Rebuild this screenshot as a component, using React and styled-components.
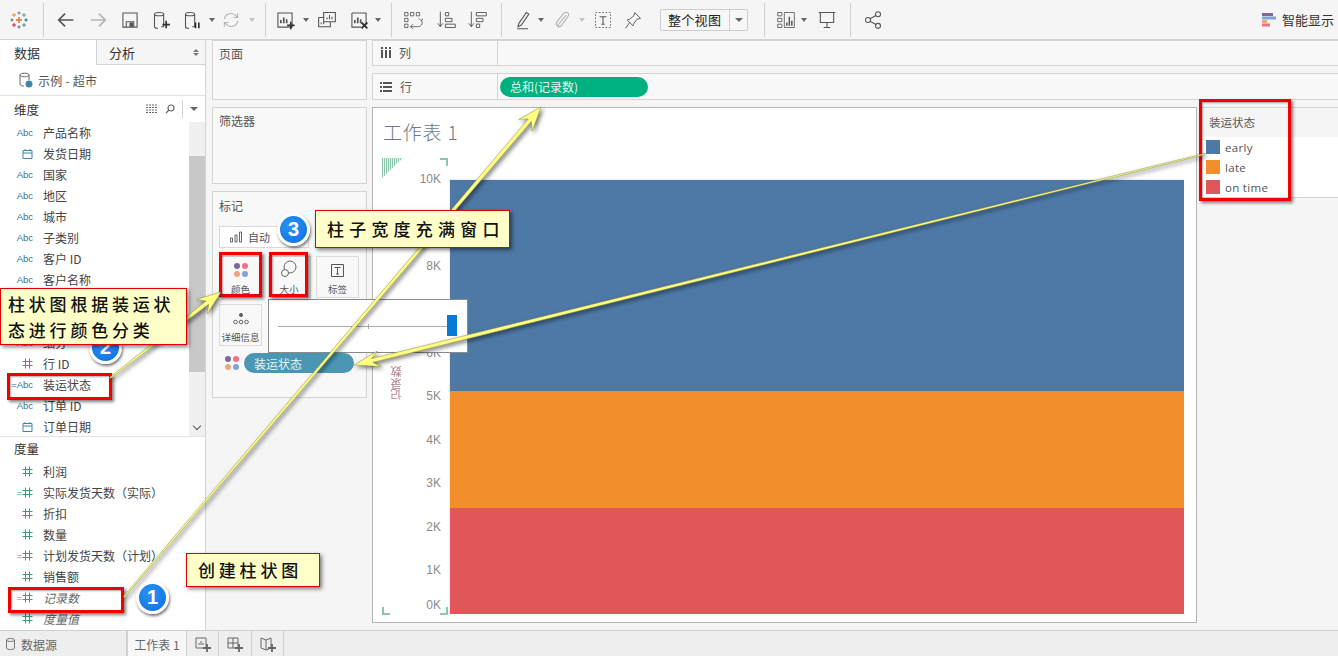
import styled, { createGlobalStyle } from 'styled-components'

const GlobalStyle = createGlobalStyle`
	html, body {
		margin: 0;
		padding: 0;
		background: #f5f5f5;
		font-family: "Noto Sans CJK SC", "Liberation Sans", sans-serif;
		font-size: 12px;
		color: #333;
	}
`;

const Page = styled.div`
	position: relative;
	width: 1338px;
	height: 656px;
	overflow: hidden;
	display: flex;
	flex-direction: column;
	background: #f5f5f5;
`;

const Toolbar = styled.div`
	height: 39px;
	flex: none;
	display: flex;
	align-items: center;
	border-bottom: 1px solid #d0d0d0;
	background: #f5f5f5;
`;

const Tool = styled.div`
	flex: none;
	width: ${p => p.$w || 32}px;
	height: 39px;
	display: flex;
	align-items: center;
	justify-content: center;
	color: ${p => (p.$off ? '#b4b4b4' : '#555')};
`;

const Caret = styled.div`
	flex: none;
	width: ${p => p.$w || 10}px;
	display: flex;
	justify-content: center;
	&::after {
		content: '';
		border-left: 3px solid transparent;
		border-right: 3px solid transparent;
		border-top: 4px solid ${p => (p.$off ? '#c4c4c4' : '#666')};
	}
`;

const ToolSep = styled.div`
	flex: none;
	width: 1px;
	height: 34px;
	margin: 0 ${p => p.$r}px 0 ${p => p.$l}px;
	background: #cfcfcf;
`;

const ViewSelect = styled.div`
	flex: none;
	width: 88px;
	height: 22px;
	margin-left: 15px;
	display: flex;
	align-items: center;
	border: 1px solid #cdcdcd;
	border-radius: 2px;
	font-size: 13px;
	color: #222;
	box-sizing: border-box;
	background: #f7f7f7;
	& > span {
		flex: 1;
		padding-left: 7px;
		letter-spacing: 0.3px;
	}
	& > div {
		width: 17px;
		height: 100%;
		border-left: 1px solid #cdcdcd;
		display: flex;
		align-items: center;
		justify-content: center;
	}
	& > div::after {
		content: '';
		border-left: 4px solid transparent;
		border-right: 4px solid transparent;
		border-top: 4px solid #666;
	}
`;

const ShowMe = styled.div`
	margin-left: auto;
	margin-right: 4px;
	display: flex;
	align-items: center;
	gap: 6px;
	font-size: 13px;
	color: #333;
`;

const Main = styled.div`
	flex: 1;
	min-height: 0;
	display: flex;
`;

const DataPane = styled.div`
	flex: none;
	width: 205px;
	display: flex;
	flex-direction: column;
	background: #fff;
	border-right: 1px solid #d4d4d4;
`;

const Tabs = styled.div`
	height: 25px;
	flex: none;
	display: flex;
`;

const Tab = styled.div`
	width: ${p => (p.$active ? '96px' : 'auto')};
	flex: ${p => (p.$active ? 'none' : '1')};
	padding-left: ${p => (p.$active ? '14px' : '12px')};
	display: flex;
	align-items: center;
	justify-content: space-between;
	box-sizing: border-box;
	font-size: 13px;
	color: #333;
	background: ${p => (p.$active ? '#fff' : '#f5f5f5')};
	border-left: ${p => (p.$active ? 'none' : '1px solid #d4d4d4')};
	border-bottom: ${p => (p.$active ? 'none' : '1px solid #d4d4d4')};
`;

const SortArrows = styled.span`
	margin-right: 6px;
	display: flex;
	flex-direction: column;
	gap: 1px;
	&::before, &::after {
		content: '';
		border-left: 3px solid transparent;
		border-right: 3px solid transparent;
	}
	&::before { border-bottom: 3px solid #777; }
	&::after { border-top: 3px solid #777; }
`;

const Source = styled.div`
	height: 30px;
	flex: none;
	display: flex;
	align-items: center;
	gap: 5px;
	padding-left: 19px;
	font-size: 12px;
	letter-spacing: 0.25px;
	color: #555;
	border-bottom: 1px solid #e2e2e2;
`;

const SectionHead = styled.div`
	height: ${p => p.$h}px;
	flex: none;
	display: flex;
	align-items: center;
	box-sizing: border-box;
	padding: 0 0 ${p => p.$lift || 0}px 14px;
	font-size: 12.5px;
	color: #333;
`;

const HeadTools = styled.div`
	margin-left: auto;
	display: flex;
	align-items: center;
	gap: 7px;
	color: #666;
	& > i {
		display: block;
		width: 1px;
		height: 18px;
		background: #d4d4d4;
	}
`;

const HeadCaret = styled.span`
	margin: 0 7px 0 0;
	border-left: 4px solid transparent;
	border-right: 4px solid transparent;
	border-top: 4px solid #666;
`;

const ListWrap = styled.div`
	height: 314px;
	flex: none;
	display: flex;
	overflow: hidden;
	border-bottom: 1px solid #e2e2e2;
`;

const FieldList = styled.div`
	flex: 1;
	min-width: 0;
`;

const ScrollBar = styled.div`
	flex: none;
	width: 16px;
	display: flex;
	flex-direction: column;
	background: #f0f0f0;
	position: relative;
	&::before {
		content: '';
		height: 34px;
		flex: none;
	}
	&::after {
		content: '';
		position: absolute;
		left: 5px;
		bottom: 7px;
		width: 5px;
		height: 5px;
		border-right: 1.5px solid #555;
		border-bottom: 1.5px solid #555;
		transform: rotate(45deg);
	}
`;

const ScrollThumb = styled.div`
	height: 216px;
	flex: none;
	background: #c8c8c8;
`;

const Row = styled.div`
	height: 21px;
	display: flex;
	align-items: center;
	font-size: 12px;
	color: ${p => (p.$italic ? '#666' : '#444')};
	font-style: ${p => (p.$italic ? 'italic' : 'normal')};
	white-space: nowrap;
`;

const TypeBox = styled.div`
	flex: none;
	width: 43px;
	padding-right: 10px;
	box-sizing: border-box;
	display: flex;
	align-items: center;
	justify-content: flex-end;
	font-family: "Liberation Sans", sans-serif;
	font-style: normal;
	font-size: 9.5px;
	color: ${p => (p.$measure ? '#3f9a7c' : '#2f7596')};
`;

const ShelfColumn = styled.div`
	flex: none;
	width: 155px;
	margin: 0 5px 0 6px;
	display: flex;
	flex-direction: column;
	gap: 7px;
`;

const Card = styled.div`
	height: ${p => p.$h}px;
	flex: none;
	box-sizing: border-box;
	border: 1px solid #d4d4d4;
	background: #f8f8f8;
	padding: 4px 6px;
	font-size: 12px;
	color: #555;
`;

const MarksCard = styled(Card)`
	padding: 5px 6px 0;
	display: flex;
	flex-direction: column;
`;

const MarksTitle = styled.div`
	height: 20px;
	margin-bottom: 9px;
`;

const MarkType = styled.div`
	width: 90px;
	height: 22px;
	flex: none;
	display: flex;
	align-items: center;
	gap: 5px;
	padding-left: 9px;
	box-sizing: border-box;
	background: #fff;
	border: 1px solid #d8d8d8;
	font-size: 11px;
`;

const MarkGrid = styled.div`
	display: grid;
	grid-template-columns: repeat(3, 43px);
	column-gap: 5.5px;
	row-gap: 6px;
	margin-top: 8px;
`;

const MarkButton = styled.div`
	height: 42px;
	box-sizing: border-box;
	border: 1px solid #dcdcdc;
	display: flex;
	flex-direction: column;
	align-items: center;
	justify-content: flex-end;
	gap: 5px;
	font-size: 9.5px;
	line-height: 13px;
	color: #555;
	background: #f8f8f8;
	padding-bottom: 1px;
`;

const MarkPillRow = styled.div`
	display: flex;
	align-items: center;
	gap: 4px;
	margin: 7px 0 0 5px;
`;

const Pill = styled.div`
	height: 20px;
	width: ${p => p.$w}px;
	border-radius: 10px;
	background: ${p => p.$bg};
	color: #e8f4f4;
	display: flex;
	align-items: center;
	padding-left: 10px;
	box-sizing: border-box;
	font-size: 12px;
`;

const Workspace = styled.div`
	flex: 1;
	min-width: 0;
	display: flex;
	flex-direction: column;
	gap: 7px;
`;

const ShelfRow = styled.div`
	height: ${p => p.$h}px;
	flex: none;
	display: flex;
	background: #f8f8f8;
	border: 1px solid #d4d4d4;
	border-right: none;
	box-sizing: border-box;
`;

const ShelfLabel = styled.div`
	width: 125px;
	flex: none;
	display: flex;
	align-items: center;
	gap: 8px;
	padding: 0 0 ${p => p.$lift || 0}px 7px;
	box-sizing: border-box;
	border-right: 1px solid #d4d4d4;
	font-size: 12px;
	color: #555;
`;

const ShelfBody = styled.div`
	flex: 1;
	display: flex;
	align-items: center;
	padding-left: 2px;
`;

const ViewRow = styled.div`
	flex: 1;
	min-height: 0;
	display: flex;
	margin-bottom: 7px;
`;

const Worksheet = styled.div`
	width: 825px;
	flex: none;
	box-sizing: border-box;
	background: #fff;
	border: 1px solid #b4b4b4;
	position: relative;
	display: flex;
	flex-direction: column;
`;

const SheetTitle = styled.div`
	height: 50px;
	flex: none;
	padding: 10px 0 0 10px;
	box-sizing: border-box;
	font-size: 19px;
	font-weight: 300;
	line-height: 28px;
	letter-spacing: 0.8px;
	color: #6d7a85;
`;

const Plot = styled.div`
	margin: 21px 12px 8px 0;
	flex: 1;
	min-height: 0;
	display: flex;
`;

const Axis = styled.div`
	width: 76px;
	flex: none;
	position: relative;
	border-right: 1px solid #f0f0f0;
`;

const AxisLabel = styled.div`
	position: absolute;
	right: 8px;
	font-family: "Liberation Sans", sans-serif;
	font-size: 12px;
	line-height: 14px;
	color: #8a8a8a;
`;

const AxisTitle = styled.div`
	position: absolute;
	left: 17px;
	top: 187px;
	writing-mode: vertical-rl;
	transform: rotate(180deg);
	font-size: 11.5px;
	line-height: 12px;
	color: #b0808c;
`;

const Bars = styled.div`
	flex: 1;
	display: flex;
	flex-direction: column;
	border-top: 1px solid #eee;
`;

const Bar = styled.div`
	flex: ${p => p.$size} 0 0;
	background: ${p => p.$color};
`;

const DropFlag = styled.svg`
	position: absolute;
	left: 9px;
	top: 50px;
`;

const CornerMark = styled.div`
	position: absolute;
	width: 6px;
	height: 6px;
	left: ${p => p.$x}px;
	${p => (p.$top ? `top: ${p.$top}px;` : `bottom: 7px;`)}
	border-color: #8cc7ab;
	border-style: solid;
	border-width: ${p => (p.$top ? '2px 2px 0 0' : p.$left ? '0 0 2px 2px' : '0 2px 2px 0')};
`;

const LegendPane = styled.div`
	flex: 1;
	margin-left: 2px;
	display: flex;
	flex-direction: column;
	height: 91px;
	box-sizing: border-box;
	border-top: 1px solid #d4d4d4;
	border-bottom: 1px solid #d4d4d4;
`;

const LegendTitle = styled.div`
	height: 29px;
	flex: none;
	display: flex;
	align-items: center;
	padding: 0 0 2px 10px;
	box-sizing: border-box;
	font-size: 11.5px;
	color: #555;
`;

const LegendBody = styled.div`
	flex: 1;
	background: #fff;
	padding-left: 7px;
`;

const LegendItem = styled.div`
	height: 20px;
	display: flex;
	align-items: center;
	gap: 5px;
	font-family: "Open Sans", "Liberation Sans", sans-serif;
	font-size: 11.5px;
	letter-spacing: 0.3px;
	color: #555;
	&::before {
		content: '';
		width: 14px;
		height: 14px;
		background: ${p => p.$color};
	}
`;

const BottomBar = styled.div`
	height: 26px;
	flex: none;
	display: flex;
	background: #eeeeee;
	border-top: 1px solid #cfcfcf;
	box-sizing: border-box;
	color: #666;
	font-size: 12px;
`;

const BottomTab = styled.div`
	width: ${p => p.$w}px;
	flex: none;
	display: flex;
	align-items: center;
	justify-content: ${p => (p.$start ? 'flex-start' : 'center')};
	gap: 6px;
	box-sizing: border-box;
	padding: ${p => (p.$start ? '1px 0 0 6px' : '1px 0 0')};
	border-right: 1px solid #d0d0d0;
	border-left: ${p => (p.$active ? '1px solid #d0d0d0' : 'none')};
	background: ${p => (p.$active ? '#f7f7f7' : 'transparent')};
`;

const Slider = styled.div`
	position: absolute;
	left: 268px;
	top: 299px;
	width: 200px;
	height: 54px;
	box-sizing: border-box;
	background: #fff;
	border: 1px solid #8a8a8a;
`;

const SliderTrack = styled.div`
	position: absolute;
	left: 9px;
	top: 26px;
	width: 170px;
	height: 1px;
	background: #aaa;
	&::before {
		content: '';
		position: absolute;
		left: 90px;
		top: -2px;
		width: 1px;
		height: 5px;
		background: #aaa;
	}
`;

const SliderThumb = styled.div`
	position: absolute;
	left: 178px;
	top: 15px;
	width: 10px;
	height: 21px;
	background: #0a78d6;
`;

const ArrowLayer = styled.svg`
	position: absolute;
	left: 0;
	top: 0;
	pointer-events: none;
	filter: drop-shadow(2px 2px 2px rgba(0, 0, 0, .55));
`;

const Highlight = styled.div`
	position: absolute;
	left: ${p => p.$x}px;
	top: ${p => p.$y}px;
	width: ${p => p.$w}px;
	height: ${p => p.$h}px;
	box-sizing: border-box;
	border: 3px solid #f00000;
	box-shadow: 2px 2px 3px rgba(0, 0, 0, .5), inset 1px 1px 2px rgba(0, 0, 0, .35);
`;

const Callout = styled.div`
	position: absolute;
	left: ${p => p.$x}px;
	top: ${p => p.$y}px;
	width: ${p => p.$w}px;
	height: ${p => p.$h}px;
	box-sizing: border-box;
	padding: ${p => p.$pad || '0 0 0 11px'};
	display: flex;
	align-items: center;
	background: #ffffc8;
	border: 1px solid #e00000;
	box-shadow: 2px 2px 4px rgba(0, 0, 0, .5);
	font-size: 17px;
	line-height: 26px;
	font-weight: 500;
	letter-spacing: ${p => p.$spacing || 3.8}px;
	color: #111;
`;

const Badge = styled.div`
	position: absolute;
	left: ${p => p.$x}px;
	top: ${p => p.$y}px;
	width: 33px;
	height: 33px;
	box-sizing: border-box;
	border-radius: 50%;
	border: 3px solid #fff;
	background: radial-gradient(circle at 40% 35%, #2a93f5, #0a6fe0);
	box-shadow: 1px 2px 3px rgba(0, 0, 0, .55);
	color: #fff;
	display: flex;
	align-items: center;
	justify-content: center;
	font-family: "Liberation Sans", sans-serif;
	font-weight: 700;
	font-size: 20px;
`;

const Svg = ({ s = 20, vb = 24, children, ...rest }) => (
	<svg width={s} height={s} viewBox={`0 0 ${vb} ${vb}`} fill="none" stroke="currentColor" strokeWidth="1.3" {...rest}>
		{children}
	</svg>
)

const Logo = () => {
	const cross = (x, y, r, c, w = 1.4) => (
		<g stroke={c} strokeWidth={w} key={`${x}-${y}`}>
			<path d={`M${x - r} ${y}H${x + r}M${x} ${y - r}V${y + r}`} />
		</g>
	)
	return (
		<svg width="18" height="18" viewBox="0 0 18 18" fill="none">
			{cross(9, 9, 3, '#e8762c', 1.5)}
			{cross(9, 2, 1.6, '#5b879b', 1)}
			{cross(9, 16, 1.6, '#5b6591', 1)}
			{cross(2, 9, 1.6, '#5a6b8c', 1)}
			{cross(16, 9, 1.6, '#1f5f8b', 1)}
			{cross(4, 4, 2, '#eb912b', 1)}
			{cross(14, 4, 2, '#7099a6', 1)}
			{cross(4, 14, 2, '#c72035', 1)}
			{cross(14, 14, 2, '#59879b', 1)}
		</svg>
	)
}

const Cylinder = ({ x = 3, y = 3, h = 15 }) => (
	<path d={`M${x} ${y + 2}c0-2.6 11-2.6 11 0v${h}h-3M${x} ${y + 2}c0 2.6 11 2.6 11 0M${x} ${y + 2}v${h}c0 1.6 2 2 4 2`} />
)

const BarsGlyph = () => (
	<path d="M7 16v-4M10.500 16v-7M14 16v-5" strokeWidth="2" />
)

const HashIcon = ({ color = '#3f9a7c' }) => (
	<svg width="11" height="11" viewBox="0 0 11 11" stroke={color} strokeWidth="1" fill="none">
		<path d="M3.500 0.500v10M7.500 0.500v10M0.500 3.500h10M0.500 7.500h10" />
	</svg>
)

const DateIcon = () => (
	<svg width="11" height="11" viewBox="0 0 11 11" stroke="#3f86a6" strokeWidth="1" fill="none">
		<path d="M1 2.500h9v8h-9zM1 5h9M3 1v2M8 1v2" />
	</svg>
)

const Dots = () => (
	<svg width="16" height="16" viewBox="0 0 16 16">
		<circle cx="4" cy="4" r="3" fill="#7b6a97" />
		<circle cx="12" cy="4" r="3" fill="#f0717f" />
		<circle cx="4" cy="12" r="3" fill="#f0a57c" />
		<circle cx="12" cy="12" r="3" fill="#7ea6d2" />
	</svg>
)

// tapered arrow, thin at the start and a notched head at the tip
const Arrow = ({ from, to, head = 24, spread = 9, start = 0.6, neck = 2 }) => {
	const dx = to[0] - from[0]
	const dy = to[1] - from[1]
	const len = Math.hypot(dx, dy)
	const ux = dx / len
	const uy = dy / len
	const nx = -uy
	const ny = ux
	const at = (along, side) => `${(from[0] + ux * along + nx * side).toFixed(1)},${(from[1] + uy * along + ny * side).toFixed(1)}`
	const points = [
		at(0, start),
		at(len - head * 0.72, neck),
		at(len - head, spread),
		at(len, 0),
		at(len - head, -spread),
		at(len - head * 0.72, -neck),
		at(0, -start),
	]
	return <polygon points={points.join(' ')} fill="#ffff80" stroke="#8d8d50" strokeWidth="0.5" />
}

// the two empty rows sit behind the second callout
const dimensions = [
	['abc', '产品名称'], ['date', '发货日期'], ['abc', '国家'], ['abc', '地区'], ['abc', '城市'],
	['abc', '子类别'], ['abc', '客户 ID'], ['abc', '客户名称'], [null, ''], [null, ''],
	['abc', '细分'], ['hash', '行 ID'], ['calcAbc', '装运状态'], ['abc', '订单 ID'], ['date', '订单日期'],
]

const measures = [
	['hash', '利润'], ['calcHash', '实际发货天数（实际）'], ['hash', '折扣'], ['hash', '数量'],
	['calcHash', '计划发货天数（计划）'], ['hash', '销售额'], ['calcHash', '记录数', true], ['hash', '度量值', true],
]

const FieldType = ({ type }) => {
	const measure = type === 'hash' || type === 'calcHash'
	return (
		<TypeBox $measure={measure || undefined}>
			{type === 'abc' && 'Abc'}
			{type === 'calcAbc' && '=Abc'}
			{type === 'date' && <DateIcon />}
			{type === 'hash' && <HashIcon />}
			{type === 'calcHash' && <>=<HashIcon /></>}
		</TypeBox>
	)
}

const axisTicks = [10, 8, 6, 5, 4, 3, 2, 1, 0]
const series = [
	{ name: 'early', color: '#4e79a7', size: 211 },
	{ name: 'late', color: '#f28e2b', size: 117 },
	{ name: 'on time', color: '#e15759', size: 106 },
]

export default function App() {
	return (
		<Page>
			<GlobalStyle />
			<Toolbar>
				<Tool $w={38}><Logo /></Tool>
				<ToolSep $l={5} $r={5} />
				<Tool $w={33}><Svg s={22}><path d="M20 12H4M11 5l-7 7 7 7" strokeWidth="1.8" /></Svg></Tool>
				<Tool $w={32} $off><Svg s={22}><path d="M4 12h16M13 5l7 7-7 7" strokeWidth="1.8" /></Svg></Tool>
				<Tool $w={32}><Svg><path d="M3.500 3.500h17v17h-17zM7.500 20v-6h9v6" /><path d="M12 15.500h3v4h-3z" fill="currentColor" /></Svg></Tool>
				<Tool $w={32}><Svg><Cylinder /><path d="M17 13v9M12.500 17.500h9" strokeWidth="2" stroke="#333" /></Svg></Tool>
				<Tool $w={29}><Svg><Cylinder /><path d="M15 15v7M19 15v7" strokeWidth="2" stroke="#333" /></Svg></Tool>
				<Caret />
				<Tool $w={28} $off><Svg><path d="M4 11a8 8 0 0 1 14-4l2 2M20 13a8 8 0 0 1-14 4l-2-2M20 4v5h-5M4 20v-5h5" /></Svg></Tool>
				<Caret $w={14} $off />
				<ToolSep $l={6} $r={3} />
				<Tool $w={32}><Svg><path d="M3.500 3.500h17v17h-17z" /><BarsGlyph /><path d="M19 14v9M14.500 18.500h9" strokeWidth="2" stroke="#333" /></Svg></Tool>
				<Caret />
				<Tool $w={32}><Svg><path d="M8 3h14v11H8zM2 9h6M2 9v11h14v-6" /><path d="M12 11V9M15 11V6M18 11V8M5 17v-2M8 17v-3" /></Svg></Tool>
				<Tool $w={32}><Svg><path d="M3.500 3.500h17v14M3.500 3.500v17h11" /><BarsGlyph /><path d="M15 15l7 7M22 15l-7 7" strokeWidth="2.200" stroke="#333" /></Svg></Tool>
				<Caret $w={6} />
				<ToolSep $l={10} $r={3} />
				<Tool $w={36}><Svg><path d="M2 3h4v4H2zM9 3h4v4H9zM16 3h4v4h-4zM2 10h4v4H2zM2 17h4v4H2zM9 20h8a5 5 0 0 0 5-8M19 10l3 3 2-3M12 17l-3 3 3 3" strokeWidth="1" /></Svg></Tool>
				<Tool $w={32}><Svg><path d="M4 2v18M1 16l3 4 3-4M10 3h4v4h-4zM10 10h8v4h-8zM10 17h12v4H10z" strokeWidth="1.100" /></Svg></Tool>
				<Tool $w={30}><Svg><path d="M4 2v18M1 16l3 4 3-4M10 3h12v4H10zM10 10h8v4h-8zM10 17h4v4h-4z" strokeWidth="1.100" /></Svg></Tool>
				<ToolSep $l={8} $r={7} />
				<Tool $w={28}><Svg><path d="M7 16l9-13 3 2-9 13-4 2zM5 22.500h13" strokeWidth="1.300" /></Svg></Tool>
				<Caret $w={8} />
				<Tool $w={33} $off><Svg><path d="M17 6l-9 11c-2 2 1 4 3 2l8-11c3-4-2-7-5-4l-8 10c-3 4 2 8 5 5" /></Svg></Tool>
				<Caret $w={7} $off />
				<Tool $w={36}><Svg><path d="M3 3h18v18H3z" strokeDasharray="2 2" strokeWidth="1" /><path d="M8 8h8M12 8v9M10 17h4" /></Svg></Tool>
				<Tool $w={24}><Svg><path d="M14 3l7 7-4 1-4 5-1 3-7-7 3-1 5-4zM8 15l-5 7" strokeWidth="1.100" /></Svg></Tool>
				<ViewSelect><span>整个视图</span><div /></ViewSelect>
				<ToolSep $l={16} $r={7} />
				<Tool $w={28}><Svg><path d="M2 3h5v4H2zM2 10h5v4H2zM2 17h5v4H2zM10 3h12v18H10z" strokeWidth="1" /><path d="M13 19v-4M16 19V8M19 19v-6" strokeWidth="1.800" /></Svg></Tool>
				<Caret $w={8} />
				<Tool $w={37}><Svg><path d="M2 3h20M4 3v12h16V3M12 15v6M8 21h8" strokeWidth="1.300" /></Svg></Tool>
				<ToolSep $l={5} $r={6} />
				<Tool $w={32}><Svg><circle cx="6" cy="12" r="3" /><circle cx="18" cy="5" r="3" /><circle cx="18" cy="19" r="3" /><path d="M8.500 10.500l7-4M8.500 13.500l7 4" /></Svg></Tool>
				<ShowMe>
					<svg width="14" height="14" viewBox="0 0 14 14">
						<rect x="0" y="0" width="11" height="3" fill="#7b6a97" />
						<rect x="0" y="3.500" width="14" height="3" fill="#7ea6d2" />
						<rect x="0" y="7" width="5" height="3" fill="#f0a57c" />
						<rect x="0" y="10.500" width="8" height="3" fill="#f0717f" />
					</svg>
					智能显示
				</ShowMe>
			</Toolbar>

			<Main>
				<DataPane>
					<Tabs>
						<Tab $active>数据</Tab>
						<Tab>分析<SortArrows /></Tab>
					</Tabs>
					<Source>
						<svg width="14" height="16" viewBox="0 0 14 16" fill="none" stroke="#666" strokeWidth="1">
							<path d="M1 3c0-2.400 9-2.400 9 0v5M1 3c0 2.400 9 2.400 9 0M1 3v9c0 1.400 2 2 4 2" />
							<circle cx="10" cy="12" r="3.500" fill="#3f86a6" stroke="none" />
						</svg>
						示例 - 超市
					</Source>
					<SectionHead $h={26}>
						维度
						<HeadTools>
							<svg width="12" height="10" viewBox="0 0 12 10" stroke="#666" strokeWidth="1" strokeDasharray="2 1" fill="none">
								<path d="M0 1h12M0 3.500h12M0 6h12M0 8.500h12" />
							</svg>
							<svg width="10" height="10" viewBox="0 0 10 10" stroke="#666" strokeWidth="1.200" fill="none">
								<circle cx="6" cy="4" r="3" /><path d="M4 6L1 9" />
							</svg>
							<i />
							<HeadCaret />
						</HeadTools>
					</SectionHead>
					<ListWrap>
						<FieldList>
							{dimensions.map(([type, name], i) => (
								<Row key={i}><FieldType type={type} />{name}</Row>
							))}
						</FieldList>
						<ScrollBar><ScrollThumb /></ScrollBar>
					</ListWrap>
					<SectionHead $h={24} $lift={2}>度量</SectionHead>
					{measures.map(([type, name, italic]) => (
						<Row key={name} $italic={italic}><FieldType type={type} />{name}</Row>
					))}
				</DataPane>

				<ShelfColumn>
					<Card $h={60}>页面</Card>
					<Card $h={77}>筛选器</Card>
					<MarksCard $h={207}>
						<MarksTitle>标记</MarksTitle>
						<MarkType>
							<svg width="14" height="12" viewBox="0 0 14 12" fill="none" stroke="#666" strokeWidth="1">
								<path d="M1.500 7h2v4h-2zM6 4h2v7H6zM10.500 1h2v10h-2z" />
							</svg>
							自动
						</MarkType>
						<MarkGrid>
							<MarkButton><Dots />颜色</MarkButton>
							<MarkButton>
								<svg width="18" height="18" viewBox="0 0 18 18" fill="none" stroke="#666" strokeWidth="1">
									<circle cx="10" cy="7" r="6" /><circle cx="5" cy="13" r="3.500" fill="#f8f8f8" />
								</svg>
								大小
							</MarkButton>
							<MarkButton>
								<svg width="15" height="15" viewBox="0 0 15 15" fill="none" stroke="#555" strokeWidth="1">
									<path d="M1.500 1.500h12v12h-12zM4.500 4.500h6M7.500 4.500v6.500M6 11h3" />
								</svg>
								标签
							</MarkButton>
							<MarkButton>
								<svg width="16" height="14" viewBox="0 0 16 14" fill="none" stroke="#666" strokeWidth="1">
									<circle cx="8" cy="3" r="1.600" fill="#666" /><circle cx="2.500" cy="10" r="1.800" /><circle cx="8" cy="10" r="1.800" /><circle cx="13.500" cy="10" r="1.800" />
								</svg>
								详细信息
							</MarkButton>
						</MarkGrid>
						<MarkPillRow>
							<Dots />
							<Pill $w={110} $bg="#4b97b3">装运状态</Pill>
						</MarkPillRow>
					</MarksCard>
				</ShelfColumn>

				<Workspace>
					<ShelfRow $h={26}>
						<ShelfLabel $lift={1}>
							<svg width="11" height="11" viewBox="0 0 11 11" fill="#555"><path d="M1 3h2v8H1zM5 3h2v8H5zM9 3h2v8H9zM1 0h2v2H1zM5 0h2v2H5zM9 0h2v2H9z" /></svg>
							列
						</ShelfLabel>
						<ShelfBody />
					</ShelfRow>
					<ShelfRow $h={27}>
						<ShelfLabel>
							<svg width="12" height="11" viewBox="0 0 12 11" fill="#555"><path d="M0 1h2v2H0zM3 1h9v2H3zM0 5h2v2H0zM3 5h9v2H3zM0 9h2v2H0zM3 9h9v2H3z" /></svg>
							行
						</ShelfLabel>
						<ShelfBody><Pill $w={148} $bg="#00b180">总和(记录数)</Pill></ShelfBody>
					</ShelfRow>
					<ViewRow>
						<Worksheet>
							<SheetTitle>工作表 1</SheetTitle>
							<DropFlag width="21" height="20" viewBox="0 0 21 20">
								<defs>
									<pattern id="stripes" width="2" height="2" patternUnits="userSpaceOnUse">
										<rect width="1.200" height="2" fill="#8cc7ab" />
									</pattern>
								</defs>
								<polygon points="0,0 21,0 0,20" fill="url(#stripes)" />
							</DropFlag>
							<CornerMark $x={67} $top={50} />
							<CornerMark $x={9} $left />
							<CornerMark $x={67} />
							<Plot>
								<Axis>
									{axisTicks.map(k => (
										<AxisLabel key={k} style={{ top: k === 0 ? 419 : 427.5 - k * 43.5 }}>{k}K</AxisLabel>
									))}
									<AxisTitle>记录数</AxisTitle>
								</Axis>
								<Bars>
									{series.map(s => <Bar key={s.name} $color={s.color} $size={s.size} />)}
								</Bars>
							</Plot>
						</Worksheet>
						<LegendPane>
							<LegendTitle>装运状态</LegendTitle>
							<LegendBody>
								{series.map(s => <LegendItem key={s.name} $color={s.color}>{s.name}</LegendItem>)}
							</LegendBody>
						</LegendPane>
					</ViewRow>
				</Workspace>
			</Main>

			<BottomBar>
				<BottomTab $w={127} $start>
					<svg width="9" height="12" viewBox="0 0 9 12" fill="none" stroke="#777" strokeWidth="1"><path d="M.5 2c0-2 8-2 8 0v8c0 2-8 2-8 0zM.5 2c0 2 8 2 8 0" /></svg>
					数据源
				</BottomTab>
				<BottomTab $w={60} $active>工作表 1</BottomTab>
				<BottomTab $w={32}>
					<svg width="16" height="15" viewBox="0 0 16 15" fill="none" stroke="#666" strokeWidth="1"><path d="M1 1h10v10H1zM4 8V6M6 8V4M8 8V6" /><path d="M12 7v8M8 11h8" strokeWidth="1.800" /></svg>
				</BottomTab>
				<BottomTab $w={33}>
					<svg width="16" height="15" viewBox="0 0 16 15" fill="none" stroke="#666" strokeWidth="1"><path d="M1 1h10v10H1zM1 6h10M6 1v10" /><path d="M12 7v8M8 11h8" strokeWidth="1.800" /></svg>
				</BottomTab>
				<BottomTab $w={32}>
					<svg width="16" height="15" viewBox="0 0 16 15" fill="none" stroke="#666" strokeWidth="1"><path d="M1 1l5 2 5-2v10l-5 2-5-2zM6 3v10" /><path d="M12 7v8M8 11h8" strokeWidth="1.800" /></svg>
				</BottomTab>
			</BottomBar>

			<Slider>
				<SliderTrack />
				<SliderThumb />
			</Slider>

			<Badge $x={89} $y={331}>2</Badge>
			<Highlight $x={219} $y={252} $w={43} $h={45} />
			<Highlight $x={269} $y={252} $w={39} $h={45} />
			<Highlight $x={7} $y={373} $w={105} $h={27} />
			<Highlight $x={8} $y={587} $w={116} $h={26} />
			<Highlight $x={1199} $y={99} $w={92} $h={102} />

			<ArrowLayer width="1338" height="656">
				<Arrow from={[124, 597]} to={[541, 107]} />
				<Arrow from={[110, 378]} to={[221, 292]} />
				<Arrow from={[1205, 154]} to={[354, 365]} head={26} spread={8} />
			</ArrowLayer>

			<Badge $x={277} $y={213}>3</Badge>
			<Badge $x={136} $y={581}>1</Badge>

			<Callout $x={186} $y={553} $w={134} $h={34}>创建柱状图</Callout>
			<Callout $x={0} $y={288} $w={187} $h={57} $pad="0 0 0 7px">柱状图根据装运状态进行颜色分类</Callout>
			<Callout $x={315} $y={210} $w={195} $h={38} $spacing={5.2}>柱子宽度充满窗口</Callout>
		</Page>
	)
}
